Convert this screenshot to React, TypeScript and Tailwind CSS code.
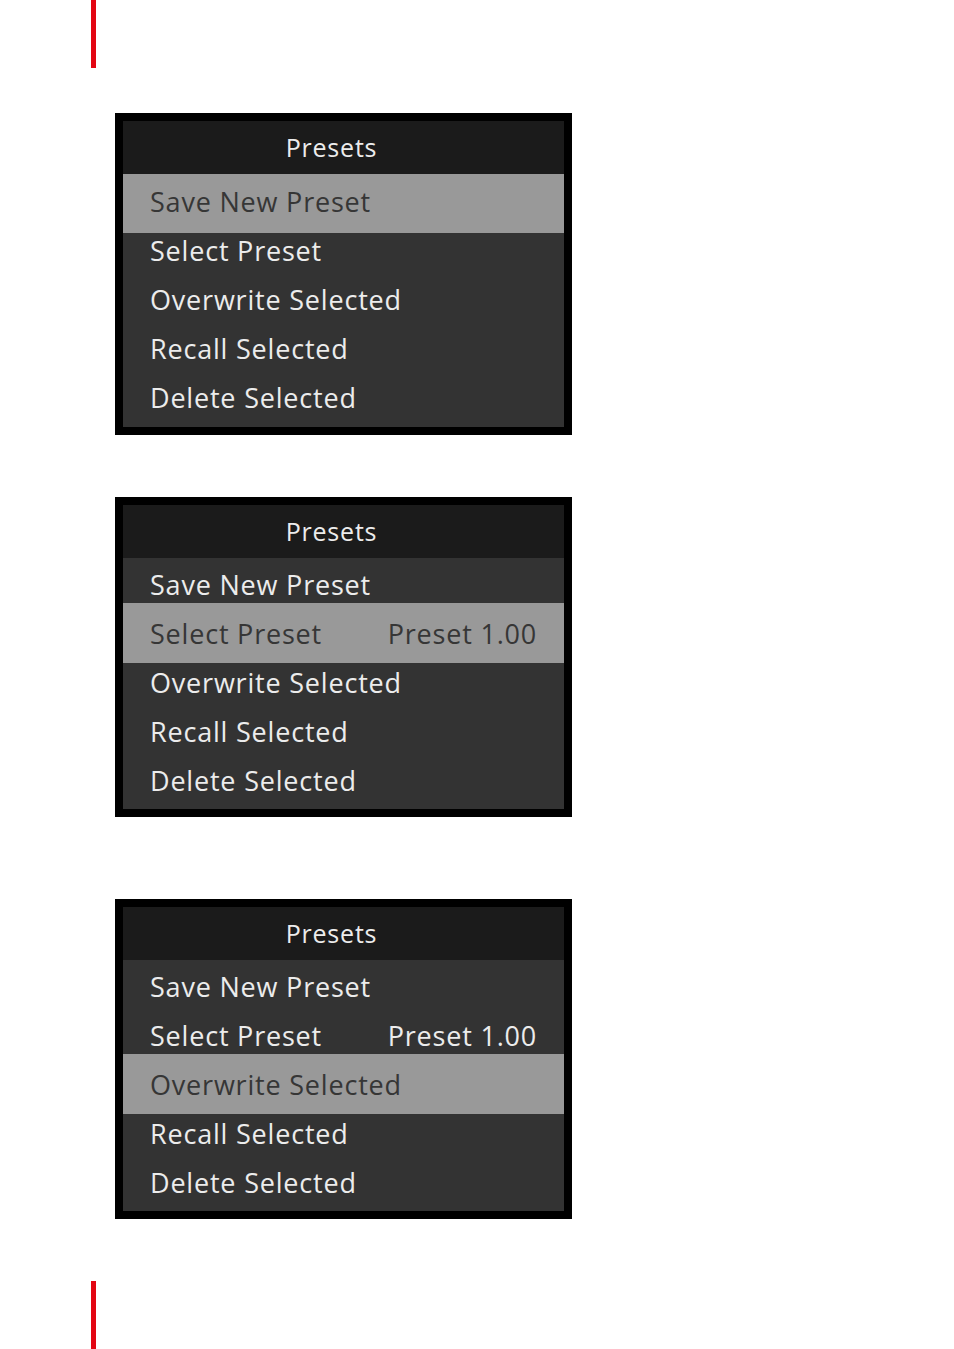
import React from "react";

type Row = { label: string; value?: string; active?: boolean; className?: string };

type PanelProps = {
  rows: Row[];
  bodyClass: string;
  className?: string;
};

function PresetsPanel({ rows, bodyClass, className }: PanelProps) {
  return (
    <div className={`w-[457px] border-[8px] border-black bg-[#333333] ${className ?? ""}`}>
      <div className="flex h-[53px] items-center justify-center bg-[#1b1b1b] pr-[24px] text-[25px] text-[#ececec]">
        Presets
      </div>
      <div className={`flex flex-col ${bodyClass}`}>
        {rows.map((row) => (
          <div
            key={row.label}
            className={
              row.active
                ? `flex items-center justify-between bg-[#999999] pl-[27px] pr-[27px] text-[#363636] ${row.className ?? "-my-[5.5px] h-[60px] pt-[2px]"}`
                : "flex h-[49px] items-center justify-between pl-[27px] pr-[27px] pt-[3px] text-[#ececec]"
            }
          >
            <span>{row.label}</span>
            {row.value && <span>{row.value}</span>}
          </div>
        ))}
      </div>
    </div>
  );
}

export default function App() {
  const base = ["Save New Preset", "Select Preset", "Overwrite Selected", "Recall Selected", "Delete Selected"];

  const first: Row[] = base.map((label, i) =>
    i === 0 ? { label, active: true, className: "h-[59px] pb-[3px] -mb-[8px]" } : { label },
  );
  const second: Row[] = base.map((label, i) => ({
    label,
    value: i === 1 ? "Preset 1.00" : undefined,
    active: i === 1,
  }));
  const third: Row[] = base.map((label, i) => ({
    label,
    value: i === 1 ? "Preset 1.00" : undefined,
    active: i === 2,
  }));

  return (
    <div
      className="flex h-[1349px] w-[954px] flex-col bg-white text-[27px] tracking-[0.8px]"
      style={{ fontFamily: '"Open Sans", "Noto Sans", sans-serif' }}
    >
      <div className="ml-[91px] h-[68px] w-[5px] bg-[#e30613]" />

      <div className="ml-[115px] mt-[45px] flex flex-col">
        <PresetsPanel rows={first} bodyClass="pb-[5px]" className="h-[322px]" />
        <PresetsPanel rows={second} bodyClass="pt-[1.5px]" className="mt-[62px] h-[320px]" />
        <PresetsPanel rows={third} bodyClass="pt-[1.5px]" className="mt-[82px] h-[320px]" />
      </div>

      <div className="ml-[91px] mt-auto h-[68px] w-[5px] bg-[#e30613]" />
    </div>
  );
}
